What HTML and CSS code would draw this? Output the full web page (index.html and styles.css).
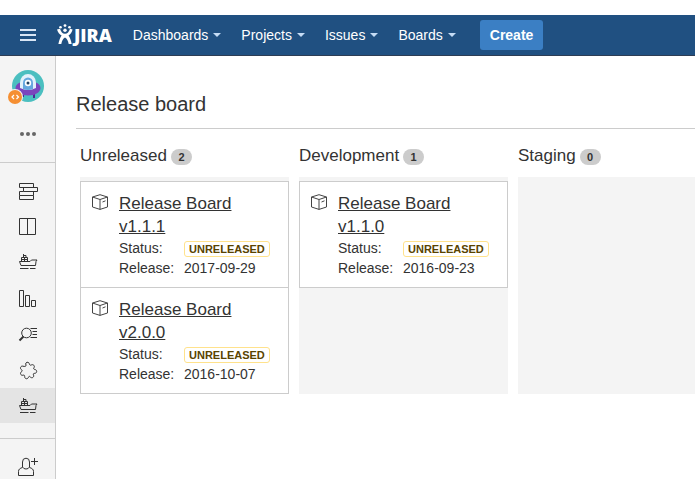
FILE: index.html
```html
<!DOCTYPE html>
<html lang="en">

<head>
    <meta charset="UTF-8">
    <meta name="viewport" content="width=device-width, initial-scale=1.0">
    <title>Release board - JIRA</title>
    <link rel="stylesheet" href="styles.css">
</head>

<body>
    <!-- shapes that are used more than once -->
    <svg class="sprite" aria-hidden="true">
        <symbol id="ship" viewBox="0 0 20 20">
            <path d="M1.500 9.500h10.500l1.500-1.500h5.500l-1 1.500-.5 4H3zM3.500 9.500V5.500h6v4M3.500 7.500h6M6.500 5.500v4M5.500 2v3.500M5 3.500h3v2M2 16.500h8.500M12 16.500h5.500" />
        </symbol>
        <symbol id="box" viewBox="0 0 16 16">
            <path d="M.5 3L8 .7 15.500 3v10L8 15.400.5 13zM.5 3L8 5.500 15.500 3M8 5.500v9.900M10.500 8l3-1.200" />
        </symbol>
    </svg>

    <header class="header">
        <button type="button" class="btn-menu" aria-label="Menu">
            <svg width="16" height="12" viewBox="0 0 16 12">
                <path d="M0 1h16M0 6h16M0 11h16" />
            </svg>
        </button>
        <a href="#" class="logo">
            <svg width="16" height="22" viewBox="0 0 16 22">
                <circle cx="3.500" cy="3.200" r="1.300" />
                <circle cx="8" cy="1.600" r="1.400" />
                <circle cx="12.500" cy="3.200" r="1.300" />
                <path d="M0 5.500l3-.8c1 3 2.500 5 5 5s4-2 5-5l2.600.8c-.8 3-2.200 4.900-4.100 6.100 1.300 1.900 2.500 4.400 3.200 8.400h-3c-.6-3.300-1.700-5.200-3.700-6.400-2 1.200-3.100 3.100-3.700 6.400H1.400c.7-4 1.900-6.500 3.200-8.400C2.500 10.400.9 8.500 0 5.500z" />
                <circle cx="8" cy="6.300" r="1.700" />
            </svg>
            <span>JIRA</span>
        </a>
        <nav class="nav">
            <a href="#">Dashboards</a>
            <a href="#">Projects</a>
            <a href="#">Issues</a>
            <a href="#">Boards</a>
        </nav>
        <button type="button" class="btn-create">Create</button>
    </header>

    <div class="container">
        <aside class="sidebar">
            <div class="sidebar-top">
                <a href="#" class="avatar" aria-label="Project">
                    <svg width="40" height="36" viewBox="0 0 40 36">
                        <circle cx="20" cy="16" r="16" fill="#4bbfc0" />
                        <path d="M15 24v3M26 24v4" stroke="#4b2795" stroke-width="2" />
                        <path d="M7.500 18c0-4 5-7 12.500-7s12.500 3 12.500 7c0 4-5 7.500-12.500 7.500S7.500 22 7.500 18z" fill="#7b45bd" />
                        <path d="M12 18v-5.500a8 8.500 0 0 1 16 0V18q-8 4-16 0z" fill="#e2f1fb" />
                        <path d="M15 19v-6a5 5.500 0 0 1 10 0v6q-5 2-10 0z" fill="#65a7de" />
                        <circle cx="20" cy="13" r="3.200" fill="#fff" />
                        <circle cx="20" cy="13" r="1.500" fill="#204060" />
                        <circle cx="7" cy="27" r="8" fill="#f4f4f4" />
                        <circle cx="7" cy="27" r="7" fill="#f58f32" />
                        <path d="M6 25l-2 2 2 2M8.500 25l2 2-2 2" fill="none" stroke="#fff" stroke-width="1.200" />
                    </svg>
                </a>
                <button type="button" class="btn-more" aria-label="More">
                    <svg width="16" height="6" viewBox="0 0 16 6">
                        <circle cx="2" cy="3" r="2" />
                        <circle cx="8" cy="3" r="2" />
                        <circle cx="14" cy="3" r="2" />
                    </svg>
                </button>
            </div>
            <nav class="sidebar-nav">
                <a href="#" aria-label="Backlog">
                    <svg viewBox="0 0 20 20"><path d="M1.500 3.500h14v4h-14zM5.500 7.500h14v4h-14zM5.500 11.500h-4v4h14v-4M1.500 15.500v4h14v-4" /></svg>
                </a>
                <a href="#" aria-label="Board">
                    <svg viewBox="0 0 20 20"><path d="M1.500 2.500h16v16h-16zM9.500 2.500v16" /></svg>
                </a>
                <a href="#" aria-label="Releases">
                    <svg viewBox="0 0 20 20"><use href="#ship" /></svg>
                </a>
                <a href="#" aria-label="Reports">
                    <svg viewBox="0 0 20 20"><path d="M1.500 2.500h4v16h-4zM7.500 7.500h4v11h-4zM13.500 12.500h4v6h-4z" /></svg>
                </a>
                <a href="#" aria-label="Issues">
                    <svg viewBox="0 0 20 20"><circle cx="8.500" cy="9" r="4.800" /><path d="M5.500 12.500l-4 4" stroke-width="2" /><path d="M12.500 4.500h6.500M14.500 7.500h4.500M14.500 10.500h4.500M12.500 13.500h6.500" /></svg>
                </a>
                <a href="#" aria-label="Add-ons">
                    <svg viewBox="0 0 20 20"><path d="M8 5C6.500 2.500 10.500 1 11.200 3.500c.3 1.500 1 2 2 1.500 2-1.200 4 1 2.800 2.700-.7 1-.3 1.700.8 1.800 2.600.2 2.400 3.800 0 3.800-1.300 0-1.800.6-1.300 1.700 1 2.200-1.800 3.700-3.200 2-.8-1-1.500-.8-1.900.4-.7 2.200-4 1.500-3.700-.8.100-1.200-.5-1.800-1.700-1.400-2.300.7-3.500-2.300-1.500-3.500 1-.6 1-1.300 0-1.900C1.500 8.500 2.700 5.500 5 6.200c1.600.5 3.400.3 3-1.200z" /></svg>
                </a>
                <a href="#" class="active" aria-label="Release board">
                    <svg viewBox="0 0 20 20"><use href="#ship" /></svg>
                </a>
            </nav>
            <div class="sidebar-bottom">
                <button type="button" aria-label="Invite user">
                    <svg viewBox="0 0 20 20"><path d="M4.500 10V5a3.500 3.800 0 0 1 7 0v5q-1 2-3.500 2T4.500 10zM4.500 10.500c-2.500.8-4 1.700-4 4v4h15v-4c0-2.300-1.500-3.200-4-4M16.500 1v7M13 4.500h7" /></svg>
                </button>
            </div>
        </aside>

        <main class="content">
            <h1>Release board</h1>
            <div class="board">
                <section class="column">
                    <h2>Unreleased <span class="count">2</span></h2>
                    <div class="column-body">
                        <article class="card">
                            <svg class="card-icon"><use href="#box" /></svg>
                            <div>
                                <a href="#">Release Board v1.1.1</a>
                                <dl>
                                    <dt>Status:</dt>
                                    <dd><span class="status">UNRELEASED</span></dd>
                                    <dt>Release:</dt>
                                    <dd>2017-09-29</dd>
                                </dl>
                            </div>
                        </article>
                        <article class="card">
                            <svg class="card-icon"><use href="#box" /></svg>
                            <div>
                                <a href="#">Release Board v2.0.0</a>
                                <dl>
                                    <dt>Status:</dt>
                                    <dd><span class="status">UNRELEASED</span></dd>
                                    <dt>Release:</dt>
                                    <dd>2016-10-07</dd>
                                </dl>
                            </div>
                        </article>
                    </div>
                </section>
                <section class="column">
                    <h2>Development <span class="count">1</span></h2>
                    <div class="column-body">
                        <article class="card">
                            <svg class="card-icon"><use href="#box" /></svg>
                            <div>
                                <a href="#">Release Board v1.1.0</a>
                                <dl>
                                    <dt>Status:</dt>
                                    <dd><span class="status">UNRELEASED</span></dd>
                                    <dt>Release:</dt>
                                    <dd>2016-09-23</dd>
                                </dl>
                            </div>
                        </article>
                    </div>
                </section>
                <section class="column">
                    <h2>Staging <span class="count">0</span></h2>
                    <div class="column-body"></div>
                </section>
            </div>
        </main>
    </div>
</body>

</html>
```

FILE: styles.css
```css
* {
    padding: 0;
    margin: 0;
    box-sizing: border-box;
}

body {
    padding: 15px 0;
    background: #fff;
    color: #333;
    font-family: "Liberation Sans", Arial, sans-serif;
    font-size: 14px;
    line-height: 20px;
}

button {
    border: none;
    background: none;
    font: inherit;
    cursor: pointer;
}

svg {
    display: block;
}

.sprite {
    display: none;
}

.header {
    display: flex;
    align-items: center;
    height: 41px;
    padding-left: 20px;
    background: #205081;
    border-bottom: 1px solid #2e3d54;
}

.btn-menu svg {
    stroke: #d9e6f5;
    stroke-width: 2;
}

.logo {
    display: flex;
    align-items: center;
    gap: 1px;
    margin: 0 21px;
    color: #fff;
    font-family: "Open Sans", sans-serif;
    font-size: 18px;
    font-weight: 800;
    text-decoration: none;
}

.logo svg {
    fill: #fff;
}

.nav {
    display: flex;
    gap: 20px;
}

.nav a {
    display: flex;
    align-items: center;
    gap: 5px;
    color: #fff;
    text-decoration: none;
}

.nav a::after {
    content: "";
    border: 4px solid transparent;
    border-top-color: #c5dcf5;
    border-bottom: none;
}

.btn-create {
    height: 30px;
    margin-left: 24px;
    padding: 0 10px;
    border-radius: 3px;
    background: #3b7fc4;
    color: #fff;
    font-weight: bold;
}

.container {
    display: flex;
}

.sidebar {
    flex: 0 0 56px;
    background: #f4f4f4;
    border-right: 1px solid #ccc;
}

.sidebar-top {
    display: flex;
    flex-direction: column;
    align-items: center;
    gap: 20px;
    height: 107px;
    padding-top: 14px;
    border-bottom: 1px solid #ccc;
}

.btn-more {
    padding: 5px;
    fill: #666;
}

.sidebar-nav {
    display: flex;
    flex-direction: column;
    gap: 1px;
    padding: 9px 0 15px;
}

.sidebar-nav a {
    display: grid;
    place-items: center;
    height: 35px;
}

.sidebar-nav a.active {
    background: #e4e4e4;
}

.sidebar-nav svg,
.sidebar-bottom svg {
    width: 20px;
    height: 20px;
    fill: none;
    stroke: #333;
}

.sidebar-bottom {
    display: flex;
    justify-content: center;
    height: 41px;
    padding-top: 16px;
    border-top: 1px solid #ccc;
}

.content {
    flex: 1;
    min-width: 0;
    padding: 36px 0 0 20px;
    overflow: hidden;
}

h1 {
    padding-bottom: 12px;
    border-bottom: 1px solid #ccc;
    font-size: 20px;
    font-weight: normal;
    line-height: 24px;
}

.board {
    display: flex;
    gap: 10px;
    padding: 15px 0 0 4px;
}

.column {
    display: flex;
    flex-direction: column;
    flex: 0 0 209px;
}

h2 {
    display: flex;
    align-items: center;
    gap: 4px;
    margin-bottom: 9px;
    font-size: 17px;
    font-weight: normal;
    line-height: 24px;
}

.count {
    min-width: 21px;
    margin-top: 2px;
    border-radius: 8px;
    background: #ccc;
    font-size: 11px;
    font-weight: bold;
    line-height: 16px;
    text-align: center;
}

.column-body {
    flex: 1;
    padding-top: 4px;
    background: #f4f4f4;
}

.card {
    display: flex;
    gap: 11px;
    padding: 10px 10px 9px 11px;
    border: 1px solid #ccc;
    background: #fff;
}

.card + .card {
    margin-top: -1px;
}

.card-icon {
    flex: none;
    width: 16px;
    height: 16px;
    margin-top: 2px;
    fill: none;
    stroke: #444;
}

.card a {
    display: block;
    max-width: 130px;
    color: #333;
    font-size: 17px;
    line-height: 23px;
}

.card dl {
    display: grid;
    grid-template-columns: 65px auto;
}

.status {
    display: inline-block;
    padding: 0 4px;
    border: 1px solid #ffe28c;
    border-radius: 3px;
    color: #594300;
    font-size: 11px;
    font-weight: bold;
    line-height: 14px;
}
```
